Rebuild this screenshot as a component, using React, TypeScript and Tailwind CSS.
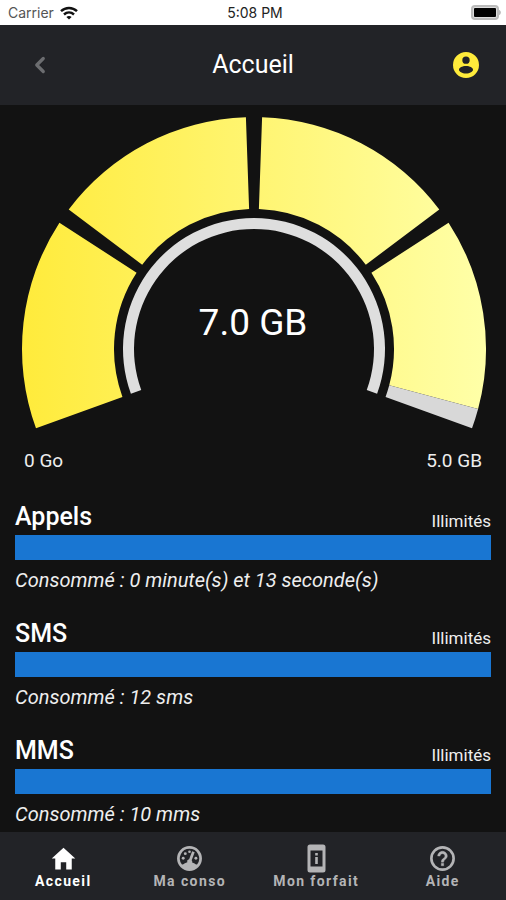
import React from 'react';
import { IoMdHome } from 'react-icons/io';
import { FiChevronLeft } from 'react-icons/fi';

interface Usage {
    title: string;
    limit: string;
    consumed: string;
}

const usages: Usage[] = [
    { title: 'Appels', limit: 'Illimités', consumed: '0 minute(s) et 13 seconde(s)' },
    { title: 'SMS', limit: 'Illimités', consumed: '12 sms' },
    { title: 'MMS', limit: 'Illimités', consumed: '10 mms' },
];

// Gauge centre, in the svg's own units
const CX = 254;
const CY = 244;

// Angles are in degrees, clockwise from the left end of the horizontal
const point = (r: number, deg: number) => {
    const a = (deg * Math.PI) / 180;
    return `${(CX - r * Math.cos(a)).toFixed(2)} ${(CY - r * Math.sin(a)).toFixed(2)}`;
};

// Closed ring slice between two radii and two angles
const slice = (inner: number, outer: number, from: number, to: number) => {
    const large = to - from > 180 ? 1 : 0;
    return `M${point(outer, from)}A${outer} ${outer} 0 ${large} 1 ${point(outer, to)}L${point(inner, to)}A${inner} ${inner} 0 ${large} 0 ${point(inner, from)}Z`;
};

const segments = [
    [-20, 33],
    [37, 88],
    [92, 143],
    [147, 195],
];

function AccountIcon() {
    return (
        <svg width="26" height="26" viewBox="0 0 24 24" fill="currentColor" aria-hidden="true">
            <path
                fillRule="evenodd"
                d="M12 0a12 12 0 1 0 0 24 12 12 0 0 0 0-24zm0 4.100a3.400 3.400 0 1 1 0 6.800 3.400 3.400 0 0 1 0-6.800zm0 8.900c3.600 0 6.500 1.600 6.500 3.300s-2.900 3.500-6.500 3.500-6.500-1.800-6.500-3.500S8.400 13 12 13z"
            />
        </svg>
    );
}

function SpeedometerIcon() {
    return (
        <svg width="29" height="29" viewBox="0 0 24 24" fill="currentColor" aria-hidden="true">
            <path
                fillRule="evenodd"
                d="M12 1.700a10.300 10.300 0 1 0 0 20.600 10.300 10.300 0 0 0 0-20.600zm0 2.300a8 8 0 0 1 6.400 12.800c-.700.400-1.400-.100-2.200-.700-1.100-.800-2.500-1.300-4.200-1.300s-3.100.500-4.200 1.300c-.800.600-1.500 1.100-2.200.700A8 8 0 0 1 12 4z"
            />
            <circle cx="6.800" cy="11.800" r="1.200" />
            <circle cx="8.500" cy="8" r="1.200" />
            <circle cx="12" cy="6.400" r="1.100" />
            <circle cx="17.300" cy="11.800" r="1.200" />
            <path d="m14.200 6 2.100.800-2.500 6.600a2 2 0 1 1-2.100-.800z" />
        </svg>
    );
}

function PhoneInfoIcon() {
    return (
        <svg width="29" height="29" viewBox="0 0 29 29" fill="currentColor" aria-hidden="true">
            <path
                fillRule="evenodd"
                d="M8 .500h13a2.500 2.500 0 0 1 2.500 2.500v23a2.500 2.500 0 0 1-2.500 2.500H8A2.500 2.500 0 0 1 5.500 26V3A2.500 2.500 0 0 1 8 .500zM8.500 6.500v16h12v-16z"
            />
            <path d="M13.200 9h2.600v2.600h-2.600zM13.200 13h2.600v7h-2.600z" />
        </svg>
    );
}

function HelpIcon() {
    return (
        <svg width="29" height="29" viewBox="0 0 24 24" fill="currentColor" aria-hidden="true">
            <circle cx="12" cy="12" r="9.200" fill="none" stroke="currentColor" strokeWidth="2.200" />
            <g stroke="currentColor" strokeWidth=".3">
                <path d="M12 6c-2.210 0-4 1.790-4 4h2c0-1.100.900-2 2-2s2 .900 2 2c0 2-3 1.750-3 5h2c0-2.250 3-2.500 3-5 0-2.210-1.790-4-4-4z" />
                <path d="M11 16h2v2h-2z" />
            </g>
        </svg>
    );
}

function StatusBar() {
    return (
        <div className="grid h-[25px] grid-cols-3 items-center bg-white pl-2 pr-1 font-['Inter',sans-serif] text-sm">
            <div className="flex items-center gap-1.5 text-[#555]">
                <span>Carrier</span>
                <svg width="18" height="14" viewBox="0 0 18 14" fill="none" stroke="#111" strokeWidth="2.4" aria-hidden="true">
                    <path d="M1 5.2C5.5.9 12.5.9 17 5.2" />
                    <path d="M4 8.5c2.900-2.700 7.100-2.700 10 0" />
                    <path d="M9 13.5 6.400 10.900c1.500-1.300 3.700-1.300 5.200 0z" fill="#111" stroke="none" />
                </svg>
            </div>
            <span className="text-center text-[#222]">5:08 PM</span>
            <svg className="justify-self-end" width="31" height="15" viewBox="0 0 31 15" aria-hidden="true">
                <rect x="1" y="1" width="26" height="13" rx="3" fill="#ddd" stroke="#bbb" strokeWidth="2" />
                <rect x="3" y="3" width="22" height="9" rx="1" fill="#000" />
                <path d="M28 5c2.500.500 2.500 4.500 0 5z" fill="#bbb" />
            </svg>
        </div>
    );
}

function Gauge() {
    return (
        <section className="relative">
            <svg className="block w-full" viewBox="0 0 506 330" aria-hidden="true">
                <defs>
                    <linearGradient id="gauge" gradientUnits="userSpaceOnUse" x1="22" y1="0" x2="486" y2="0">
                        <stop offset="0" stopColor="#ffeb3b" />
                        <stop offset="1" stopColor="#ffffa8" />
                    </linearGradient>
                </defs>
                {segments.map(([from, to]) => (
                    <path key={from} d={slice(140, 232, from, to)} fill="url(#gauge)" />
                ))}
                <path d={slice(140, 232, 195, 200)} fill="#d8d8d8" />
                <path d={slice(120, 131, -20, 200)} fill="#dedede" />
            </svg>
            {/* Current value, over the middle of the dial */}
            <p className="absolute inset-x-0 top-48 text-center text-[37px] leading-[52px]">7.0 GB</p>
            <div className="flex justify-between px-6 pt-3 text-[19px] leading-7 text-[#eee]">
                <span>0 Go</span>
                <span>5.0 GB</span>
            </div>
        </section>
    );
}

function UsageRow({ title, limit, consumed }: Usage) {
    return (
        <section>
            <div className="flex items-end justify-between">
                <h2 className="text-[25px] font-medium leading-9">{title}</h2>
                <span className="text-[17px] leading-7 text-[#eee]">{limit}</span>
            </div>
            <div className="h-[25px] bg-[#1976d2]" />
            <p className="pt-1 text-xl italic leading-8 text-[#eee]">Consommé : {consumed}</p>
        </section>
    );
}

const tabs = [
    { label: 'Accueil', icon: <IoMdHome size={29} />, active: true },
    { label: 'Ma conso', icon: <SpeedometerIcon /> },
    { label: 'Mon forfait', icon: <PhoneInfoIcon /> },
    { label: 'Aide', icon: <HelpIcon /> },
];

export default function App() {
    return (
        <div className="flex min-h-screen flex-col bg-[#121212] font-['Roboto',sans-serif] text-white">
            <StatusBar />
            <header className="flex h-20 items-center justify-between bg-[#222327] px-6">
                <button type="button" aria-label="Retour" className="flex w-8 justify-center text-[#6c6d70]">
                    <FiChevronLeft size={26} strokeWidth={3} />
                </button>
                <h1 className="text-[25px] leading-8">Accueil</h1>
                <button type="button" aria-label="Compte" className="flex w-8 justify-center text-[#ffeb3b]">
                    <AccountIcon />
                </button>
            </header>
            <main className="flex-1">
                <Gauge />
                <div className="flex flex-col gap-5 px-[15px] pt-6">
                    {usages.map(usage => (
                        <UsageRow key={usage.title} {...usage} />
                    ))}
                </div>
            </main>
            <nav className="sticky bottom-0 grid h-[68px] grid-cols-4 bg-[#222327] text-[#b4b4b6]">
                {tabs.map(tab => (
                    <a
                        key={tab.label}
                        href="#"
                        aria-current={tab.active ? 'page' : undefined}
                        className="flex flex-col items-center pt-3 text-sm font-bold leading-4 tracking-widest aria-[current=page]:text-white"
                    >
                        {tab.icon}
                        {tab.label}
                    </a>
                ))}
            </nav>
        </div>
    );
}
